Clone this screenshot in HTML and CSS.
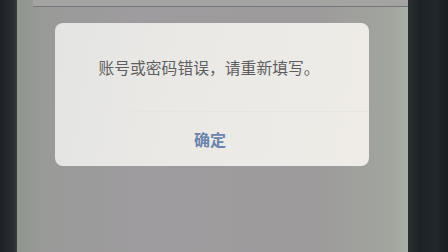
FILE: index.html
```html
<!DOCTYPE html>
<html lang="zh">
<head>
<meta charset="utf-8">
<link rel="stylesheet" href="styles.css">
</head>
<body>
<div class="phone">
  <div class="bezel bezel-left"></div>
  <div class="screen">
    <div class="topbar"></div>
    <div class="dialog">
      <div class="message">账号或密码错误，请重新填写。</div>
      <div class="actions"><span class="ok">确定</span></div>
    </div>
  </div>
  <div class="bezel bezel-right"></div>
</div>
</body>
</html>
```
FILE: styles.css
```css
html, body {
  margin: 0;
  padding: 0;
  width: 448px;
  height: 252px;
  overflow: hidden;
  background: #202428;
}
.phone {
  display: flex;
  width: 448px;
  height: 252px;
}
.bezel-left {
  width: 17px;
  background: linear-gradient(to right, #1d2024, #2a2e33 80%, #3a3f40);
}
.bezel-right {
  flex: 1;
  background: linear-gradient(to right, #2a3031, #1c2125 30%, #22272c 70%, #1a1d21);
}
.screen {
  width: 391px;
  display: flex;
  flex-direction: column;
  background: linear-gradient(to right, #8f968e 0px, #9a9a99 25px, #9e9c9e 120px, #9d9b9c 300px, #a2a59e 375px, #aab0a6 391px);
}
.topbar {
  height: 6px;
  margin-left: 16px;
  border-bottom: 1px solid #74777a;
  background: #a4a4a3;
}
.dialog {
  margin: 16px 39px 0 38px;
  height: 143px;
  border-radius: 8px;
  background: linear-gradient(100deg, #e4e4e2 0%, #eae9e6 40%, #efece7 100%);
  display: flex;
  flex-direction: column;
}
.message {
  height: 89px;
  box-sizing: border-box;
  padding-top: 35px;
  line-height: 20px;
  font-family: "Noto Sans CJK SC", "Noto Sans", sans-serif;
  font-size: 15.8px;
  color: #5e5e5e;
  text-align: center;
  padding-right: 6px;
  border-bottom: 1px solid #e6e5e2;
}
.actions {
  flex: 1;
  display: flex;
  align-items: center;
  justify-content: center;
  padding-right: 4px;
}
.ok {
  font-family: "Noto Sans CJK SC", "Noto Sans", sans-serif;
  font-size: 16px;
  font-weight: 600;
  color: #6a84ad;
  line-height: 20px;
}
```
